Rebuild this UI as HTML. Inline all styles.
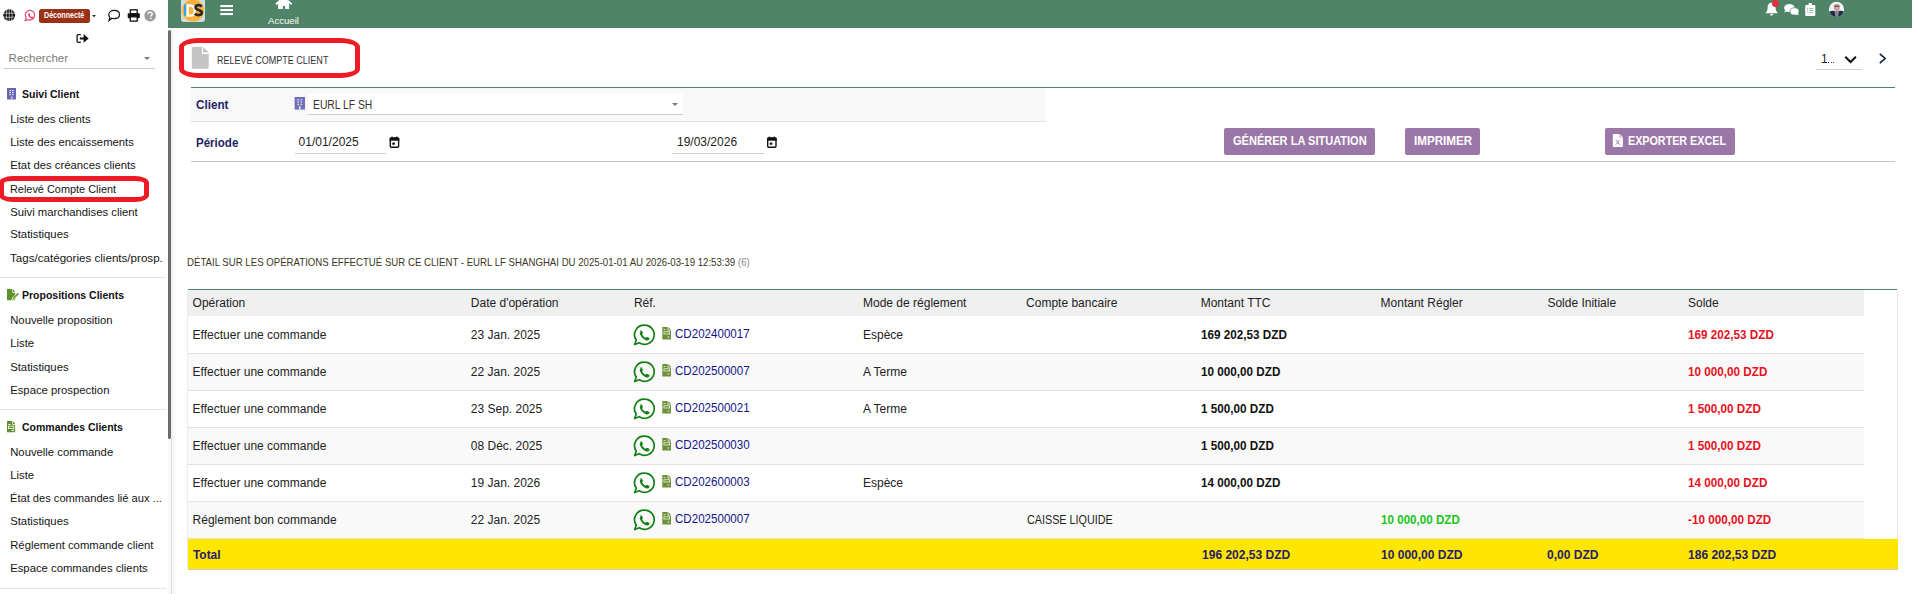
<!DOCTYPE html>
<html><head><meta charset="utf-8"><style>
html,body{margin:0;padding:0;width:1912px;height:594px;overflow:hidden;background:#fff;position:relative;font-family:"Liberation Sans",sans-serif}
.t{position:absolute;white-space:nowrap;line-height:1}
.r{position:absolute}
svg{position:absolute;overflow:visible}
</style></head><body>
<div class="t" style="left:8.6px;top:53px;font-weight:normal;font-size:11.5px;color:#7a7a7a;">Rechercher</div>
<div class="r" style="left:4px;top:68px;width:151px;height:1px;background:#c9c9c9;"></div>
<div class="r" style="left:144px;top:57px;width:0;height:0;border-left:3px solid transparent;border-right:3px solid transparent;border-top:3px solid #777"></div>
<div class="t" style="left:22px;top:89px;font-weight:bold;font-size:10.5px;color:#111;">Suivi Client</div>
<div class="t" style="left:22px;top:290px;font-weight:bold;font-size:10.5px;color:#111;">Propositions Clients</div>
<div class="t" style="left:22px;top:422px;font-weight:bold;font-size:10.5px;color:#111;">Commandes Clients</div>
<div class="t" style="left:10.2px;top:114px;font-weight:normal;font-size:11.3px;color:#151515;">Liste des clients</div>
<div class="t" style="left:10.2px;top:137px;font-weight:normal;font-size:11.3px;color:#151515;">Liste des encaissements</div>
<div class="t" style="left:10.2px;top:160px;font-weight:normal;font-size:11.3px;color:#151515;">Etat des créances clients</div>
<div class="t" style="left:10.2px;top:184px;font-weight:normal;font-size:11.3px;color:#151515;transform:scaleX(0.965);transform-origin:0 0;">Relevé Compte Client</div>
<div class="t" style="left:10.2px;top:207px;font-weight:normal;font-size:11.3px;color:#151515;">Suivi marchandises client</div>
<div class="t" style="left:10.2px;top:229px;font-weight:normal;font-size:11.3px;color:#151515;">Statistiques</div>
<div class="t" style="left:10.2px;top:253px;font-weight:normal;font-size:11.3px;color:#151515;transform:scaleX(1.027);transform-origin:0 0;">Tags/catégories clients/prosp.</div>
<div class="t" style="left:10.2px;top:315px;font-weight:normal;font-size:11.3px;color:#151515;">Nouvelle proposition</div>
<div class="t" style="left:10.2px;top:338px;font-weight:normal;font-size:11.3px;color:#151515;">Liste</div>
<div class="t" style="left:10.2px;top:362px;font-weight:normal;font-size:11.3px;color:#151515;">Statistiques</div>
<div class="t" style="left:10.2px;top:385px;font-weight:normal;font-size:11.3px;color:#151515;">Espace prospection</div>
<div class="t" style="left:10.2px;top:447px;font-weight:normal;font-size:11.3px;color:#151515;">Nouvelle commande</div>
<div class="t" style="left:10.2px;top:470px;font-weight:normal;font-size:11.3px;color:#151515;">Liste</div>
<div class="t" style="left:10.2px;top:493px;font-weight:normal;font-size:11.3px;color:#151515;transform:scaleX(0.983);transform-origin:0 0;">État des commandes lié aux ...</div>
<div class="t" style="left:10.2px;top:516px;font-weight:normal;font-size:11.3px;color:#151515;">Statistiques</div>
<div class="t" style="left:10.2px;top:540px;font-weight:normal;font-size:11.3px;color:#151515;">Réglement commande client</div>
<div class="t" style="left:10.2px;top:563px;font-weight:normal;font-size:11.3px;color:#151515;">Espace commandes clients</div>
<div class="r" style="left:0px;top:277px;width:166px;height:1px;background:#e3e3e3;"></div>
<div class="r" style="left:0px;top:409px;width:166px;height:1px;background:#e3e3e3;"></div>
<div class="r" style="left:0px;top:588px;width:166px;height:1px;background:#e3e3e3;"></div>
<div class="r" style="left:-1px;top:176px;width:140px;height:16px;border:5px solid #ed1c24;border-radius:14px/7px"></div>
<div class="r" style="left:171px;top:28px;width:6px;height:566px;background:linear-gradient(to right, rgba(0,0,0,0.06), rgba(0,0,0,0));"></div>
<div class="r" style="left:168px;top:438px;width:3px;height:156px;background:#f7f7f7;"></div>
<div class="r" style="left:171px;top:438px;width:1px;height:156px;background:#dedede;"></div>
<div class="r" style="left:168px;top:30px;width:3px;height:409px;background:#6b6b6b;border-radius:1.5px"></div>
<div class="r" style="left:168px;top:0px;width:1744px;height:28px;background:#508468;"></div>
<div class="t" style="left:268px;top:16px;font-weight:normal;font-size:9.6px;color:#fff;">Accueil</div>
<div class="r" style="left:179px;top:38px;width:171px;height:30px;border:5px solid #ed1c24;border-radius:20px/9px"></div>
<div class="t" style="left:216.5px;top:55px;font-weight:normal;font-size:10.7px;color:#333;transform:scaleX(0.845);transform-origin:0 0;">RELEVÉ COMPTE CLIENT</div>
<div class="t" style="left:1821px;top:53px;font-weight:normal;font-size:12px;color:#222;">1</div>
<div class="r" style="left:1828px;top:62px;width:1px;height:1px;background:#333"></div><div class="r" style="left:1830.7px;top:62px;width:1px;height:1px;background:#333"></div><div class="r" style="left:1833.4px;top:62px;width:1px;height:1px;background:#333"></div>
<div class="r" style="left:1816px;top:69px;width:46px;height:1px;background:#cfcfcf;"></div>
<div class="r" style="left:191px;top:87px;width:1704px;height:1px;background:#508468;"></div>
<div class="r" style="left:191px;top:88px;width:855px;height:33px;background:#f8f8f8;"></div>
<div class="r" style="left:191px;top:121px;width:855px;height:1px;background:#dedede;"></div>
<div class="t" style="left:196.1px;top:99px;font-weight:bold;font-size:12px;color:#1f1f66;transform:scaleX(0.975);transform-origin:0 0;">Client</div>
<div class="r" style="left:308px;top:94px;width:375px;height:20px;background:#fff;"></div>
<div class="r" style="left:308px;top:114px;width:375px;height:1px;background:#cdcdcd;"></div>
<div class="t" style="left:313.2px;top:99px;font-weight:normal;font-size:12px;color:#333;transform:scaleX(0.86);transform-origin:0 0;">EURL LF SH</div>
<div class="r" style="left:672px;top:103px;width:0;height:0;border-left:3px solid transparent;border-right:3px solid transparent;border-top:3px solid #777"></div>
<div class="t" style="left:196.4px;top:137px;font-weight:bold;font-size:12px;color:#1f1f66;transform:scaleX(0.961);transform-origin:0 0;">Période</div>
<div class="t" style="left:298.6px;top:136px;font-weight:normal;font-size:12px;color:#222;">01/01/2025</div>
<div class="r" style="left:295px;top:153px;width:91px;height:1px;background:#cfcfcf;"></div>
<div class="t" style="left:677px;top:136px;font-weight:normal;font-size:12px;color:#222;">19/03/2026</div>
<div class="r" style="left:672px;top:153px;width:92px;height:1px;background:#cfcfcf;"></div>
<div class="r" style="left:191px;top:161px;width:1704px;height:1px;background:#c6c6c6;"></div>
<div class="r" style="left:1224px;top:128px;width:151px;height:27px;background:#9b77a8;border-radius:2px"></div>
<div class="t" style="left:1232.8px;top:135px;font-weight:bold;font-size:12.5px;color:#fff;transform:scaleX(0.883);transform-origin:0 0;">GÉNÉRER LA SITUATION</div>
<div class="r" style="left:1405px;top:128px;width:75px;height:27px;background:#9b77a8;border-radius:2px"></div>
<div class="t" style="left:1413.8px;top:135px;font-weight:bold;font-size:12.5px;color:#fff;transform:scaleX(0.93);transform-origin:0 0;">IMPRIMER</div>
<div class="r" style="left:1605px;top:128px;width:130px;height:27px;background:#9b77a8;border-radius:2px"></div>
<div class="t" style="left:1628.3px;top:135px;font-weight:bold;font-size:12.5px;color:#fff;transform:scaleX(0.86);transform-origin:0 0;">EXPORTER EXCEL</div>
<div class="t" style="left:187px;top:257px;font-weight:normal;font-size:10.8px;color:#3a3622;transform:scaleX(0.8925);transform-origin:0 0;">DÉTAIL SUR LES OPÉRATIONS EFFECTUÉ SUR CE CLIENT - EURL LF SHANGHAI DU 2025-01-01 AU 2026-03-19 12:53:39</div>
<div class="t" style="left:738.4px;top:257px;font-weight:normal;font-size:10.8px;color:#8a8a8a;transform:scaleX(0.886);transform-origin:0 0;">(6)</div>
<div class="r" style="left:188px;top:289px;width:1709px;height:1px;background:#508468;"></div>
<div class="r" style="left:188px;top:290px;width:1676px;height:26px;background:#f0f0f0;"></div>
<div class="t" style="left:192.6px;top:297px;font-weight:normal;font-size:12px;color:#222;">Opération</div>
<div class="t" style="left:470.8px;top:297px;font-weight:normal;font-size:12px;color:#222;">Date d'opération</div>
<div class="t" style="left:633.9px;top:297px;font-weight:normal;font-size:12px;color:#222;">Réf.</div>
<div class="t" style="left:863px;top:297px;font-weight:normal;font-size:12px;color:#222;">Mode de réglement</div>
<div class="t" style="left:1026.1px;top:297px;font-weight:normal;font-size:12px;color:#222;">Compte bancaire</div>
<div class="t" style="left:1200.7px;top:297px;font-weight:normal;font-size:12px;color:#222;">Montant TTC</div>
<div class="t" style="left:1380.6px;top:297px;font-weight:normal;font-size:12px;color:#222;">Montant Régler</div>
<div class="t" style="left:1547.4px;top:297px;font-weight:normal;font-size:12px;color:#222;">Solde Initiale</div>
<div class="t" style="left:1688px;top:297px;font-weight:normal;font-size:12px;color:#222;">Solde</div>
<div class="r" style="left:188px;top:353px;width:1676px;height:37px;background:#f9f9f9;"></div>
<div class="r" style="left:188px;top:427px;width:1676px;height:37px;background:#f9f9f9;"></div>
<div class="r" style="left:188px;top:501px;width:1676px;height:37px;background:#f9f9f9;"></div>
<div class="r" style="left:188px;top:353px;width:1676px;height:1px;background:#e2e2e2;"></div>
<div class="r" style="left:188px;top:390px;width:1676px;height:1px;background:#e2e2e2;"></div>
<div class="r" style="left:188px;top:427px;width:1676px;height:1px;background:#e2e2e2;"></div>
<div class="r" style="left:188px;top:464px;width:1676px;height:1px;background:#e2e2e2;"></div>
<div class="r" style="left:188px;top:501px;width:1676px;height:1px;background:#e2e2e2;"></div>
<div class="r" style="left:188px;top:538px;width:1676px;height:1px;background:#e2e2e2;"></div>
<div class="t" style="left:192.6px;top:329px;font-weight:normal;font-size:12px;color:#222;">Effectuer une commande</div>
<div class="t" style="left:470.8px;top:329px;font-weight:normal;font-size:12px;color:#222;">23 Jan. 2025</div>
<div class="t" style="left:675px;top:328px;font-weight:normal;font-size:12px;color:#14148a;transform:scaleX(0.965);transform-origin:0 0;">CD202400017</div>
<div class="t" style="left:863px;top:329px;font-weight:normal;font-size:12px;color:#222;">Espèce</div>
<div class="t" style="left:1200.7px;top:329px;font-weight:bold;font-size:12px;color:#111;transform:scaleX(0.975);transform-origin:0 0;">169 202,53 DZD</div>
<div class="t" style="left:1688px;top:329px;font-weight:bold;font-size:12px;color:#e8121e;transform:scaleX(0.975);transform-origin:0 0;">169 202,53 DZD</div>
<div class="t" style="left:192.6px;top:366px;font-weight:normal;font-size:12px;color:#222;">Effectuer une commande</div>
<div class="t" style="left:470.8px;top:366px;font-weight:normal;font-size:12px;color:#222;">22 Jan. 2025</div>
<div class="t" style="left:675px;top:365px;font-weight:normal;font-size:12px;color:#14148a;transform:scaleX(0.965);transform-origin:0 0;">CD202500007</div>
<div class="t" style="left:863px;top:366px;font-weight:normal;font-size:12px;color:#222;">A Terme</div>
<div class="t" style="left:1200.7px;top:366px;font-weight:bold;font-size:12px;color:#111;transform:scaleX(0.975);transform-origin:0 0;">10 000,00 DZD</div>
<div class="t" style="left:1688px;top:366px;font-weight:bold;font-size:12px;color:#e8121e;transform:scaleX(0.975);transform-origin:0 0;">10 000,00 DZD</div>
<div class="t" style="left:192.6px;top:403px;font-weight:normal;font-size:12px;color:#222;">Effectuer une commande</div>
<div class="t" style="left:470.8px;top:403px;font-weight:normal;font-size:12px;color:#222;">23 Sep. 2025</div>
<div class="t" style="left:675px;top:402px;font-weight:normal;font-size:12px;color:#14148a;transform:scaleX(0.965);transform-origin:0 0;">CD202500021</div>
<div class="t" style="left:863px;top:403px;font-weight:normal;font-size:12px;color:#222;">A Terme</div>
<div class="t" style="left:1200.7px;top:403px;font-weight:bold;font-size:12px;color:#111;transform:scaleX(0.975);transform-origin:0 0;">1 500,00 DZD</div>
<div class="t" style="left:1688px;top:403px;font-weight:bold;font-size:12px;color:#e8121e;transform:scaleX(0.975);transform-origin:0 0;">1 500,00 DZD</div>
<div class="t" style="left:192.6px;top:440px;font-weight:normal;font-size:12px;color:#222;">Effectuer une commande</div>
<div class="t" style="left:470.8px;top:440px;font-weight:normal;font-size:12px;color:#222;">08 Déc. 2025</div>
<div class="t" style="left:675px;top:439px;font-weight:normal;font-size:12px;color:#14148a;transform:scaleX(0.965);transform-origin:0 0;">CD202500030</div>
<div class="t" style="left:1200.7px;top:440px;font-weight:bold;font-size:12px;color:#111;transform:scaleX(0.975);transform-origin:0 0;">1 500,00 DZD</div>
<div class="t" style="left:1688px;top:440px;font-weight:bold;font-size:12px;color:#e8121e;transform:scaleX(0.975);transform-origin:0 0;">1 500,00 DZD</div>
<div class="t" style="left:192.6px;top:477px;font-weight:normal;font-size:12px;color:#222;">Effectuer une commande</div>
<div class="t" style="left:470.8px;top:477px;font-weight:normal;font-size:12px;color:#222;">19 Jan. 2026</div>
<div class="t" style="left:675px;top:476px;font-weight:normal;font-size:12px;color:#14148a;transform:scaleX(0.965);transform-origin:0 0;">CD202600003</div>
<div class="t" style="left:863px;top:477px;font-weight:normal;font-size:12px;color:#222;">Espèce</div>
<div class="t" style="left:1200.7px;top:477px;font-weight:bold;font-size:12px;color:#111;transform:scaleX(0.975);transform-origin:0 0;">14 000,00 DZD</div>
<div class="t" style="left:1688px;top:477px;font-weight:bold;font-size:12px;color:#e8121e;transform:scaleX(0.975);transform-origin:0 0;">14 000,00 DZD</div>
<div class="t" style="left:192.6px;top:514px;font-weight:normal;font-size:12px;color:#222;">Réglement bon commande</div>
<div class="t" style="left:470.8px;top:514px;font-weight:normal;font-size:12px;color:#222;">22 Jan. 2025</div>
<div class="t" style="left:675px;top:513px;font-weight:normal;font-size:12px;color:#14148a;transform:scaleX(0.965);transform-origin:0 0;">CD202500007</div>
<div class="t" style="left:1026.8999999999999px;top:514px;font-weight:normal;font-size:12px;color:#222;transform:scaleX(0.898);transform-origin:0 0;">CAISSE LIQUIDE</div>
<div class="t" style="left:1380.6px;top:514px;font-weight:bold;font-size:12.5px;color:#22c422;transform:scaleX(0.93);transform-origin:0 0;">10 000,00 DZD</div>
<div class="t" style="left:1688px;top:514px;font-weight:bold;font-size:12px;color:#e8121e;transform:scaleX(0.975);transform-origin:0 0;">-10 000,00 DZD</div>
<div class="r" style="left:1897px;top:290px;width:1px;height:279px;background:#e6e6e6;"></div>
<div class="r" style="left:187px;top:290px;width:1px;height:279px;background:#ececec;"></div>
<div class="r" style="left:188px;top:539px;width:1710px;height:30px;background:#ffe600;"></div>
<div class="r" style="left:188px;top:569px;width:1710px;height:1px;background:#c8c8c8;"></div>
<div class="t" style="left:192.8px;top:549px;font-weight:bold;font-size:12.5px;color:#28206a;transform:scaleX(0.95);transform-origin:0 0;">Total</div>
<div class="t" style="left:1201.8px;top:549px;font-weight:bold;font-size:12.5px;color:#28206a;transform:scaleX(0.962);transform-origin:0 0;">196 202,53 DZD</div>
<div class="t" style="left:1380.8px;top:549px;font-weight:bold;font-size:12.5px;color:#28206a;transform:scaleX(0.962);transform-origin:0 0;">10 000,00 DZD</div>
<div class="t" style="left:1547.4px;top:549px;font-weight:bold;font-size:12.5px;color:#28206a;transform:scaleX(0.962);transform-origin:0 0;">0,00 DZD</div>
<div class="t" style="left:1688px;top:549px;font-weight:bold;font-size:12.5px;color:#28206a;transform:scaleX(0.962);transform-origin:0 0;">186 202,53 DZD</div>
<svg style="left:0;top:0;position:absolute;z-index:5" width="1912" height="594" viewBox="0 0 1912 594"><circle cx="9.25" cy="15.2" r="5.9" fill="#111"/><g stroke="#fff" stroke-width="0.6" fill="none"><line x1="3" y1="13.2" x2="15.5" y2="13.2"/><line x1="3" y1="17.2" x2="15.5" y2="17.2"/><line x1="9.25" y1="9" x2="9.25" y2="21.5"/><path d="M7 9.6 Q5.6 15.2 7 20.8"/><path d="M11.5 9.6 Q12.9 15.2 11.5 20.8"/></g><g fill="none" stroke="#e8466e" stroke-width="1.2"><path d="M30.4 10.3 A4.9 4.9 0 1 1 27.9 19.7 L25.2 20.6 L26.1 18 A4.9 4.9 0 0 1 30.4 10.3 Z"/></g><path d="M28.6 13.2 c.5-.3 .9-.1 1.1.4 l.3.7 c.1.3 0 .5-.2.7 c.4.9 1 1.5 1.9 1.9 c.2-.2 .4-.3 .7-.2 l.7.3 c.5.2 .6.6.4 1.1 c-.4.6-1 .8-1.7.6 c-1.7-.5-3.1-1.9-3.6-3.6 c-.2-.7 0-1.3.4-1.9z" fill="#e8466e"/><path d="M92 15 L96 15 L94 17.2 Z" fill="#333"/><path d="M114.2 10.4 C117.4 10.4 119.5 12.2 119.5 14.5 C119.5 16.8 117.4 18.6 114.2 18.6 C113.3 18.6 112.5 18.5 111.8 18.2 L109.0 20.6 L109.9 17.7 C109.1 16.8 108.8 15.7 108.8 14.5 C108.8 12.2 111 10.4 114.2 10.4 Z" fill="none" stroke="#111" stroke-width="1.15"/><rect x="130.3" y="9.8" width="6.9" height="4" fill="none" stroke="#111" stroke-width="1.3"/><rect x="127.7" y="13.2" width="12.1" height="5" rx="1" fill="#111"/><rect x="130.3" y="16.8" width="6.9" height="4.3" fill="#fff" stroke="#111" stroke-width="1.3"/><circle cx="150.15" cy="15.6" r="5.8" fill="#9c9c9c"/><path d="M148.2 14.1 C148.2 12.8 149.1 12.1 150.2 12.1 C151.4 12.1 152.2 12.8 152.2 13.9 C152.2 15.2 150.8 15.3 150.8 16.6" fill="none" stroke="#fff" stroke-width="1.4"/><rect x="150" y="17.6" width="1.5" height="1.5" fill="#fff"/><path d="M80.8 34.6 L78.2 34.6 Q77.1 34.6 77.1 35.7 L77.1 41.2 Q77.1 42.3 78.2 42.3 L80.8 42.3" fill="none" stroke="#111" stroke-width="1.3"/><path d="M79.8 37.4 L83.6 37.4 L83.6 34.1 L88.7 38.45 L83.6 42.8 L83.6 39.6 L79.8 39.6 Z" fill="#111"/><rect x="7" y="88" width="9" height="11.5" fill="#6666b4"/><rect x="9.5" y="90" width="1.3" height="1.2" fill="#fff"/><rect x="12.2" y="90" width="1.3" height="1.2" fill="#fff"/><rect x="9.5" y="92" width="1.3" height="1.2" fill="#fff"/><rect x="12.2" y="92" width="1.3" height="1.2" fill="#fff"/><rect x="9.5" y="94" width="1.3" height="1.2" fill="#fff"/><rect x="12.2" y="94" width="1.3" height="1.2" fill="#fff"/><rect x="11" y="96.5" width="1.5" height="3" fill="#c9c9ec"/><path d="M7 289 L12.2 289 L12.2 292.8 L15.2 292.8 L15.2 300.2 L7 300.2 Z" fill="#5e902c"/><path d="M12.8 289 L15.2 291.9 L12.8 291.9 Z" fill="#5e902c"/><path d="M11.6 300 L12.3 297.4 L17.6 292.1 L19.6 294.1 L14.3 299.4 Z" fill="#fff"/><path d="M12.4 299.2 L12.9 297.5 L17.7 292.8 L19.0 294.1 L14.2 298.8 Z" fill="#6a9a30"/><path d="M7 421 L12.2 421 L12.2 424.8 L15.2 424.8 L15.2 432.2 L7 432.2 Z" fill="#5e902c"/><path d="M12.8 421 L15.2 423.9 L12.8 423.9 Z" fill="#5e902c"/><rect x="8.2" y="424" width="2.4" height="0.9" fill="#fff"/><rect x="8.5" y="426.2" width="5.4" height="2.4" fill="none" stroke="#fff" stroke-width="0.8"/><rect x="11.5" y="430" width="2.5" height="0.9" fill="#fff"/><rect x="181" y="-3" width="24" height="25" rx="3" fill="#d3ddd7"/><circle cx="193" cy="10.5" r="11" fill="#fbb03b"/><rect x="184" y="4.3" width="2.4" height="11.5" fill="#29a8e0"/><path d="M187.6 5.5 L190 5.5 C193 5.5 194.6 7.4 194.6 10.5 C194.6 13.6 193 15.6 190 15.6 L187.6 15.6 Z" fill="none" stroke="#fff" stroke-width="2.4"/><path d="M201.9 6.4 C200.8 5.4 199.7 5.2 198.5 5.2 C196.6 5.2 195.6 6.2 195.6 7.6 C195.6 10.6 201.8 9.4 201.8 12.6 C201.8 14.1 200.6 15.1 198.5 15.1 C197.1 15.1 195.9 14.7 194.9 13.8" fill="none" stroke="#2b2b2b" stroke-width="2.7"/><rect x="220.3" y="5" width="12.7" height="2.1" fill="#fff"/><rect x="220.3" y="9" width="12.7" height="2.1" fill="#fff"/><rect x="220.3" y="13" width="12.7" height="2.1" fill="#fff"/><path d="M275.9 4.2 L283.8 -2.5 L291.7 4.2" fill="none" stroke="#fff" stroke-width="1.8"/><path d="M278 3 L283.8 -1.8 L289.1 3 L289.1 9 L285.1 9 L285.1 5.9 L282.8 5.9 L282.8 9 L278 9 Z" fill="#fff"/><path d="M1771.6 2.8 C1768.6 2.8 1767.6 5.4 1767.6 8 C1767.6 10.2 1766.7 11.6 1765.9 12.4 L1765.9 13.2 L1777.4 13.2 L1777.4 12.4 C1776.6 11.6 1775.6 10.2 1775.6 8 C1775.6 5.4 1774.6 2.8 1771.6 2.8 Z" fill="#fff"/><path d="M1770 14 L1773.2 14 Q1772.9 15.8 1771.6 15.8 Q1770.3 15.8 1770 14 Z" fill="#fff"/><circle cx="1775.5" cy="3.5" r="3.5" fill="#e0303e"/><ellipse cx="1789.4" cy="8" rx="5.3" ry="4" fill="#fff"/><path d="M1785.5 10.5 L1784 12.2 L1787.5 11.5 Z" fill="#fff"/><ellipse cx="1794.5" cy="11.4" rx="4.5" ry="3.6" fill="#fff" stroke="#508468" stroke-width="0.7"/><path d="M1797.5 13.6 L1799 15 L1795.5 14.6 Z" fill="#fff"/><rect x="1805.2" y="5" width="10.1" height="11" rx="1" fill="#fff"/><rect x="1808.6" y="3" width="3.3" height="3" rx="1" fill="#fff"/><g fill="#7aa58c"><rect x="1807" y="8.2" width="1.2" height="0.8"/><rect x="1809.3" y="8.2" width="3.8" height="0.8"/><rect x="1807" y="10.2" width="1.2" height="0.8"/><rect x="1809.3" y="10.2" width="3.8" height="0.8"/><rect x="1807" y="12.3" width="1.2" height="0.6"/><rect x="1809.3" y="12.3" width="3.8" height="0.6"/></g><defs><clipPath id="av"><circle cx="1836.5" cy="9.4" r="7.6"/></clipPath></defs><g clip-path="url(#av)"><rect x="1828" y="1" width="17" height="17" fill="#f2f2f2"/><ellipse cx="1836.8" cy="7.5" rx="3" ry="3.8" fill="#c9a49a"/><rect x="1834" y="5.6" width="5.5" height="1.2" fill="#555"/><path d="M1828.5 18 L1829 12 Q1832 10 1836.8 11.5 Q1841 10 1844.5 12 L1845 18 Z" fill="#1d2a4a"/><path d="M1834.5 11 L1839 11 L1838 17 L1835.5 17 Z" fill="#8a8a8a"/></g><path d="M193.3 46.8 L201.9 46.8 L201.9 53.9 L208.7 53.9 L208.7 67.3 Q208.7 68.8 207.2 68.8 L193.3 68.8 Q191.8 68.8 191.8 67.3 L191.8 48.3 Q191.8 46.8 193.3 46.8 Z" fill="#c4c4c4"/><path d="M203.1 46.8 L208.7 52.4 L203.1 52.4 Z" fill="#c4c4c4"/><path d="M1845.2 56.8 L1850.55 62 L1855.9 56.8" fill="none" stroke="#111" stroke-width="2"/><path d="M1879.8 53.8 L1885.2 58.5 L1879.8 63.2" fill="none" stroke="#0d1f3c" stroke-width="1.6"/><rect x="294.6" y="97" width="10.4" height="12.6" fill="#7070b8"/><rect x="297.4" y="99.2" width="1.5" height="1.3" fill="#e8e8f6"/><rect x="300.6" y="99.2" width="1.5" height="1.3" fill="#e8e8f6"/><rect x="297.4" y="101.5" width="1.5" height="1.3" fill="#e8e8f6"/><rect x="300.6" y="101.5" width="1.5" height="1.3" fill="#e8e8f6"/><rect x="297.4" y="103.8" width="1.5" height="1.3" fill="#e8e8f6"/><rect x="300.6" y="103.8" width="1.5" height="1.3" fill="#e8e8f6"/><rect x="299" y="106.3" width="1.6" height="3.3" fill="#e8e8f6"/><rect x="390.3" y="138" width="8.3" height="9.3" rx="1" fill="none" stroke="#111" stroke-width="1.4"/><rect x="389.6" y="137.8" width="9.7" height="2.9" fill="#111"/><rect x="391.40000000000003" y="136.6" width="1.3" height="1.6" fill="#111"/><rect x="396.20000000000005" y="136.6" width="1.3" height="1.6" fill="#111"/><rect x="392.3" y="142.4" width="2.6" height="2.3" rx="0.5" fill="#111"/><rect x="767.7" y="138" width="8.3" height="9.3" rx="1" fill="none" stroke="#111" stroke-width="1.4"/><rect x="767.0" y="137.8" width="9.7" height="2.9" fill="#111"/><rect x="768.8" y="136.6" width="1.3" height="1.6" fill="#111"/><rect x="773.6" y="136.6" width="1.3" height="1.6" fill="#111"/><rect x="769.7" y="142.4" width="2.6" height="2.3" rx="0.5" fill="#111"/><path d="M1612.8 133.9 L1619.7 133.9 L1622.9 137.1 L1622.9 146.9 L1612.8 146.9 Z" fill="#fff"/><path d="M1619.7 133.9 L1619.7 137.1 L1622.9 137.1" fill="none" stroke="#9b76a8" stroke-width="0.6"/><path d="M1615.9 140.2 L1619.5 144.6 M1619.5 140.2 L1615.9 144.6" stroke="#9b76a8" stroke-width="1"/><g transform="translate(0 0)"><path d="M644.6 325.1 A9.6 9.6 0 1 1 639.3 342.7 L634.6 344.5 L636.3 340.2 A9.6 9.6 0 0 1 644.6 325.1 Z" fill="none" stroke="#128012" stroke-width="1.7" stroke-linejoin="round"/><path d="M640.2 330.7 c.6-.7 1.4-.6 1.8.2 l.8 1.5 c.2.5 .1.9-.3 1.3 l-.5.5 c.8 1.6 2 2.8 3.6 3.6 l.5-.5 c.4-.4 .8-.5 1.3-.3 l1.5.8 c.8.4 .9 1.2 .2 1.8 c-.9.9-2.1 1.1-3.2.6 c-2.6-1.1-4.7-3.2-5.8-5.8 c-.5-1.1-.3-2.3.6-3.2 z" fill="#128012"/><path d="M662.3 327.1 L667.6 327.1 L667.6 330.4 L671 330.4 L671 339.6 L662.3 339.6 Z" fill="#6b9138"/><path d="M668.3 327.1 L671 329.7 L668.3 329.7 Z" fill="#6b9138"/><rect x="663.6" y="329.3" width="1.8" height="0.8" fill="#fff"/><rect x="663.9" y="331.8" width="5.8" height="2.2" fill="none" stroke="#fff" stroke-width="0.7"/><rect x="667.4" y="336.6" width="2" height="0.8" fill="#fff"/></g><g transform="translate(0 37)"><path d="M644.6 325.1 A9.6 9.6 0 1 1 639.3 342.7 L634.6 344.5 L636.3 340.2 A9.6 9.6 0 0 1 644.6 325.1 Z" fill="none" stroke="#128012" stroke-width="1.7" stroke-linejoin="round"/><path d="M640.2 330.7 c.6-.7 1.4-.6 1.8.2 l.8 1.5 c.2.5 .1.9-.3 1.3 l-.5.5 c.8 1.6 2 2.8 3.6 3.6 l.5-.5 c.4-.4 .8-.5 1.3-.3 l1.5.8 c.8.4 .9 1.2 .2 1.8 c-.9.9-2.1 1.1-3.2.6 c-2.6-1.1-4.7-3.2-5.8-5.8 c-.5-1.1-.3-2.3.6-3.2 z" fill="#128012"/><path d="M662.3 327.1 L667.6 327.1 L667.6 330.4 L671 330.4 L671 339.6 L662.3 339.6 Z" fill="#6b9138"/><path d="M668.3 327.1 L671 329.7 L668.3 329.7 Z" fill="#6b9138"/><rect x="663.6" y="329.3" width="1.8" height="0.8" fill="#fff"/><rect x="663.9" y="331.8" width="5.8" height="2.2" fill="none" stroke="#fff" stroke-width="0.7"/><rect x="667.4" y="336.6" width="2" height="0.8" fill="#fff"/></g><g transform="translate(0 74)"><path d="M644.6 325.1 A9.6 9.6 0 1 1 639.3 342.7 L634.6 344.5 L636.3 340.2 A9.6 9.6 0 0 1 644.6 325.1 Z" fill="none" stroke="#128012" stroke-width="1.7" stroke-linejoin="round"/><path d="M640.2 330.7 c.6-.7 1.4-.6 1.8.2 l.8 1.5 c.2.5 .1.9-.3 1.3 l-.5.5 c.8 1.6 2 2.8 3.6 3.6 l.5-.5 c.4-.4 .8-.5 1.3-.3 l1.5.8 c.8.4 .9 1.2 .2 1.8 c-.9.9-2.1 1.1-3.2.6 c-2.6-1.1-4.7-3.2-5.8-5.8 c-.5-1.1-.3-2.3.6-3.2 z" fill="#128012"/><path d="M662.3 327.1 L667.6 327.1 L667.6 330.4 L671 330.4 L671 339.6 L662.3 339.6 Z" fill="#6b9138"/><path d="M668.3 327.1 L671 329.7 L668.3 329.7 Z" fill="#6b9138"/><rect x="663.6" y="329.3" width="1.8" height="0.8" fill="#fff"/><rect x="663.9" y="331.8" width="5.8" height="2.2" fill="none" stroke="#fff" stroke-width="0.7"/><rect x="667.4" y="336.6" width="2" height="0.8" fill="#fff"/></g><g transform="translate(0 111)"><path d="M644.6 325.1 A9.6 9.6 0 1 1 639.3 342.7 L634.6 344.5 L636.3 340.2 A9.6 9.6 0 0 1 644.6 325.1 Z" fill="none" stroke="#128012" stroke-width="1.7" stroke-linejoin="round"/><path d="M640.2 330.7 c.6-.7 1.4-.6 1.8.2 l.8 1.5 c.2.5 .1.9-.3 1.3 l-.5.5 c.8 1.6 2 2.8 3.6 3.6 l.5-.5 c.4-.4 .8-.5 1.3-.3 l1.5.8 c.8.4 .9 1.2 .2 1.8 c-.9.9-2.1 1.1-3.2.6 c-2.6-1.1-4.7-3.2-5.8-5.8 c-.5-1.1-.3-2.3.6-3.2 z" fill="#128012"/><path d="M662.3 327.1 L667.6 327.1 L667.6 330.4 L671 330.4 L671 339.6 L662.3 339.6 Z" fill="#6b9138"/><path d="M668.3 327.1 L671 329.7 L668.3 329.7 Z" fill="#6b9138"/><rect x="663.6" y="329.3" width="1.8" height="0.8" fill="#fff"/><rect x="663.9" y="331.8" width="5.8" height="2.2" fill="none" stroke="#fff" stroke-width="0.7"/><rect x="667.4" y="336.6" width="2" height="0.8" fill="#fff"/></g><g transform="translate(0 148)"><path d="M644.6 325.1 A9.6 9.6 0 1 1 639.3 342.7 L634.6 344.5 L636.3 340.2 A9.6 9.6 0 0 1 644.6 325.1 Z" fill="none" stroke="#128012" stroke-width="1.7" stroke-linejoin="round"/><path d="M640.2 330.7 c.6-.7 1.4-.6 1.8.2 l.8 1.5 c.2.5 .1.9-.3 1.3 l-.5.5 c.8 1.6 2 2.8 3.6 3.6 l.5-.5 c.4-.4 .8-.5 1.3-.3 l1.5.8 c.8.4 .9 1.2 .2 1.8 c-.9.9-2.1 1.1-3.2.6 c-2.6-1.1-4.7-3.2-5.8-5.8 c-.5-1.1-.3-2.3.6-3.2 z" fill="#128012"/><path d="M662.3 327.1 L667.6 327.1 L667.6 330.4 L671 330.4 L671 339.6 L662.3 339.6 Z" fill="#6b9138"/><path d="M668.3 327.1 L671 329.7 L668.3 329.7 Z" fill="#6b9138"/><rect x="663.6" y="329.3" width="1.8" height="0.8" fill="#fff"/><rect x="663.9" y="331.8" width="5.8" height="2.2" fill="none" stroke="#fff" stroke-width="0.7"/><rect x="667.4" y="336.6" width="2" height="0.8" fill="#fff"/></g><g transform="translate(0 185)"><path d="M644.6 325.1 A9.6 9.6 0 1 1 639.3 342.7 L634.6 344.5 L636.3 340.2 A9.6 9.6 0 0 1 644.6 325.1 Z" fill="none" stroke="#128012" stroke-width="1.7" stroke-linejoin="round"/><path d="M640.2 330.7 c.6-.7 1.4-.6 1.8.2 l.8 1.5 c.2.5 .1.9-.3 1.3 l-.5.5 c.8 1.6 2 2.8 3.6 3.6 l.5-.5 c.4-.4 .8-.5 1.3-.3 l1.5.8 c.8.4 .9 1.2 .2 1.8 c-.9.9-2.1 1.1-3.2.6 c-2.6-1.1-4.7-3.2-5.8-5.8 c-.5-1.1-.3-2.3.6-3.2 z" fill="#128012"/><path d="M662.3 327.1 L667.6 327.1 L667.6 330.4 L671 330.4 L671 339.6 L662.3 339.6 Z" fill="#6b9138"/><path d="M668.3 327.1 L671 329.7 L668.3 329.7 Z" fill="#6b9138"/><rect x="663.6" y="329.3" width="1.8" height="0.8" fill="#fff"/><rect x="663.9" y="331.8" width="5.8" height="2.2" fill="none" stroke="#fff" stroke-width="0.7"/><rect x="667.4" y="336.6" width="2" height="0.8" fill="#fff"/></g></svg>
<div class="r" style="left:39px;top:9px;width:51px;height:14px;background:#9a3014;border-radius:2.5px"></div>
<div class="t" style="left:43.9px;top:11px;font-weight:bold;font-size:8.7px;color:#fff;transform:scaleX(0.817);transform-origin:0 0;">Déconnecté</div>
</body></html>
